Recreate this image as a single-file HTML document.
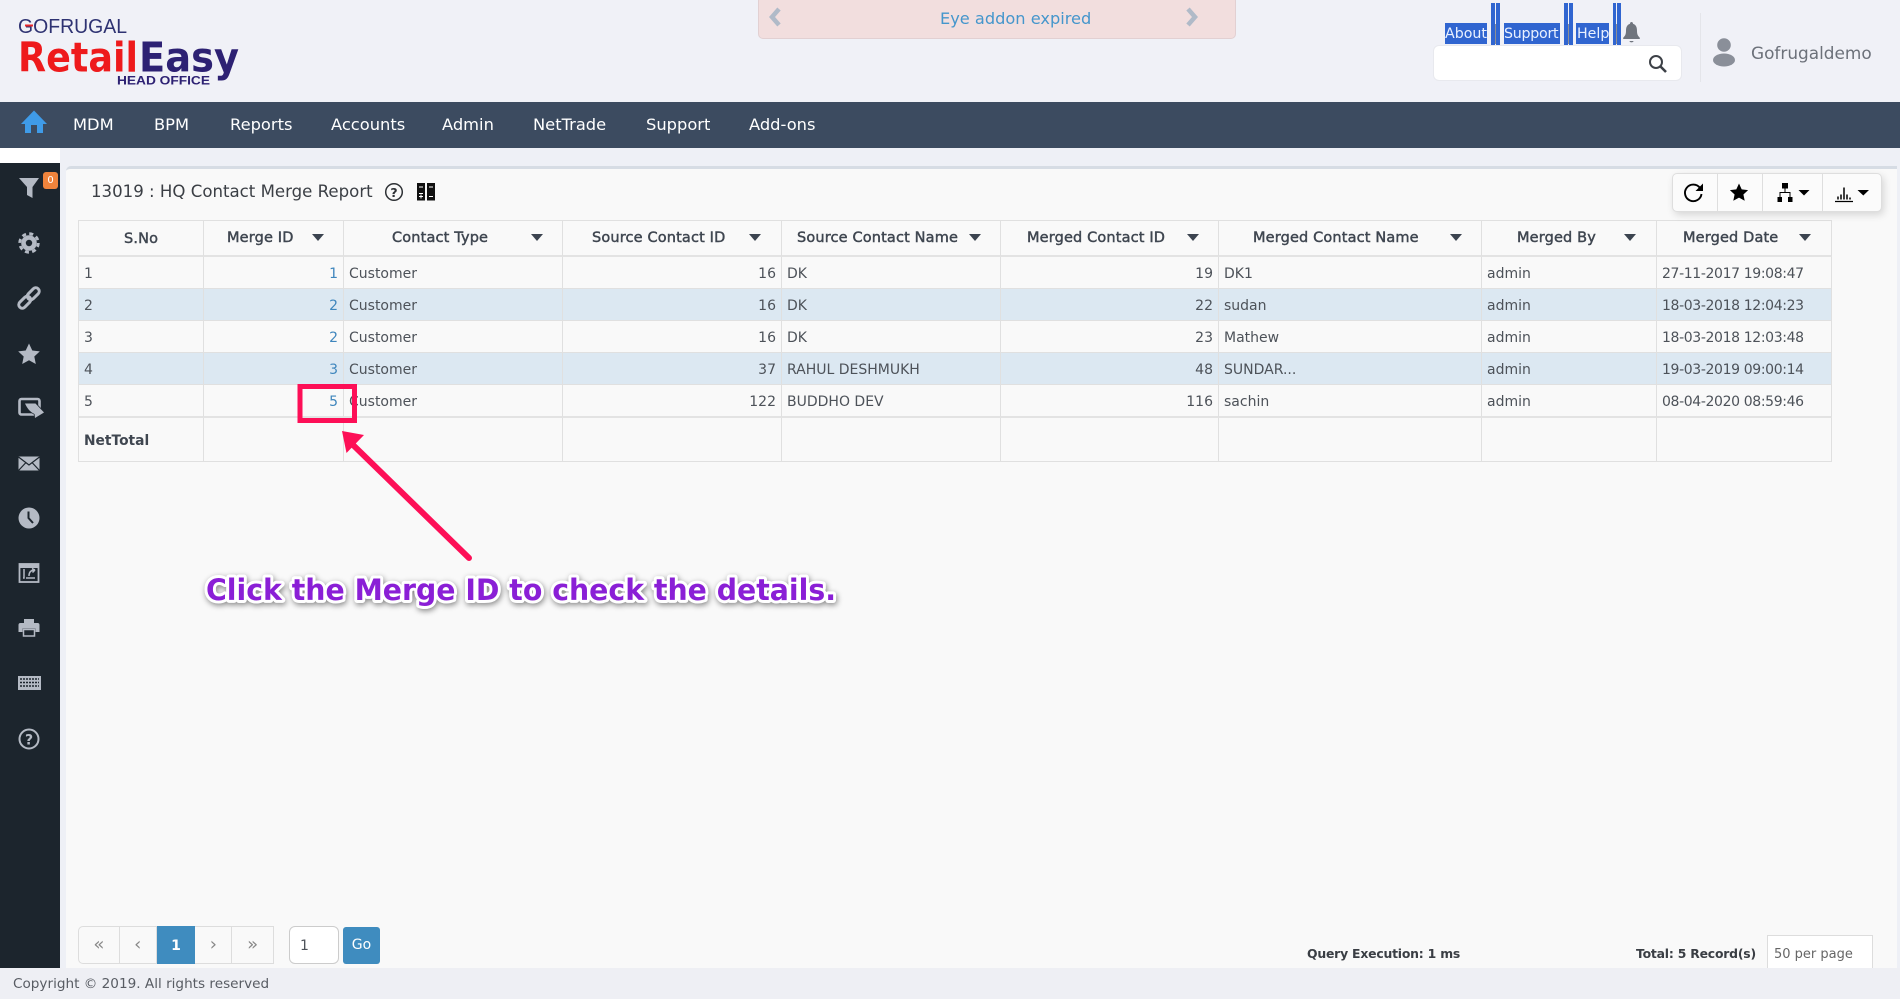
<!DOCTYPE html>
<html lang="en"><head><meta charset="utf-8"><title>HQ Contact Merge Report</title>
<style>
*{box-sizing:border-box}
html,body{margin:0;padding:0;width:1900px;height:999px;overflow:hidden;background:#fff;font-family:"DejaVu Sans","Liberation Sans",sans-serif;color:#4d5259}
.a{position:absolute}
header{position:absolute;left:0;top:0;width:1900px;height:102px;background:#f0f1f7}
nav{position:absolute;left:0;top:102px;width:1900px;height:46px;background:#3c4b60}
nav a{position:absolute;top:0;line-height:46px;color:#fff;font-size:16.3px;white-space:nowrap}
.alert{left:758px;top:-4px;width:478px;height:43px;background:#f2dede;border:1px solid #e2d0d2;border-radius:5px}
.alert span{position:absolute;left:181px;top:7px;line-height:30px;font-size:16.2px;color:#4596cc;white-space:nowrap}
.sel{position:absolute;top:23px;height:21px;background:#3065d0;color:#eaf1ff;font-size:14.2px;line-height:23px;white-space:nowrap;overflow:hidden}
.bar{position:absolute;top:3px;height:42px;width:4px;background:#3065d0}
.gl{position:absolute;top:24px;height:20px;width:1px;background:#8d8f96}
.search{left:1433px;top:45px;width:249px;height:36px;background:#fff;border:1px solid #e8e9ee;border-radius:6px}
.uname{left:1751px;top:41px;line-height:24px;font-size:16.9px;color:#6c717a;white-space:nowrap}
aside{position:absolute;left:0;top:163px;width:60px;height:805px;background:#1c252d}
.bg2{position:absolute;left:60px;top:148px;width:1840px;height:820px;background:#eef0f6}
.gap{position:absolute;left:0;top:148px;width:1900px;height:15px;background:#fff}
main{position:absolute;left:66px;top:166px;width:1831px;height:802px;background:#f9f9f9;border-top:3px solid #d6dce4;border-top-left-radius:5px}
.badge{left:43px;top:172px;width:15px;height:17px;background:#f0843c;border-radius:3px;color:#fff;font-size:10px;line-height:17px;text-align:center}
h1{position:absolute;left:91px;top:180px;margin:0;font-weight:400;font-size:16.6px;line-height:24px;color:#3b3f45;white-space:nowrap}
.tools{left:1672px;top:173px;width:210px;height:39px;background:#fbfbfb;border:1px solid #dedede;border-radius:5px;box-shadow:2px 3px 8px rgba(0,0,0,.14)}
.tools i{position:absolute;top:0;width:1px;height:37px;background:#dedede}
table{position:absolute;left:78px;top:220px;width:1754px;border-collapse:separate;border-spacing:0;table-layout:fixed;font-size:14px;border-left:1px solid #e0e0e0;border-top:1px solid #e0e0e0}
td,th{padding:0 5px;border-right:1px solid #e0e0e0;border-bottom:1px solid #e0e0e0;white-space:nowrap;overflow:hidden;font-weight:400}
th{height:36px;border-bottom:2px solid #e3e3e3;position:relative;color:#3f4650;font-size:14.5px;-webkit-text-stroke:.45px #3f4650}
th span{position:absolute;top:7px;line-height:20px;letter-spacing:.15px}
th b{position:absolute;top:13px;width:0;height:0;border-left:6px solid transparent;border-right:6px solid transparent;border-top:7px solid #3c4450}
tbody td{height:32px;color:#4d5259;padding-top:2px}
tr.alt td{background:#dce8f2}
tr.last td{height:33px;border-bottom:2px solid #e3e3e3}
tr.net td{height:44px;font-weight:700;font-size:13.8px;color:#3f4650}
.r{text-align:right}.l{color:#3f86bd}
.d{letter-spacing:-.37px}
.pg{left:78px;top:926px;width:196px;height:38px;border:1px solid #ddd;border-radius:5px 0 0 5px;background:#f9f9f9;display:flex;list-style:none;margin:0;padding:0;color:#888;font-size:18px}
.pg li{height:36px;line-height:36px;text-align:center;border-right:1px solid #ddd}
.pg li.on{background:#3f8cbf;color:#fff;font-weight:700;border-right:0;margin-top:-1px;height:38px;line-height:40px;font-size:14px}
.pin{left:289px;top:926px;width:50px;height:38px;background:#fff;border:1px solid #ccc;border-radius:6px;font-size:14px;line-height:38px;padding-left:10px}
.go{left:343px;top:927px;width:37px;height:37px;background:#3f8cbf;border-radius:3px;color:#fff;font-size:14px;line-height:37px;text-align:center}
.st{top:944px;line-height:20px;font-size:12.4px;font-weight:700;color:#3a3e44;white-space:nowrap;letter-spacing:-.2px}
.per{left:1767px;top:935px;width:106px;height:33px;background:#fff;border:1px solid #ddd;border-bottom:0;font-size:13px;line-height:38px;padding-left:6px;color:#666;white-space:nowrap}
footer{position:absolute;left:0;top:968px;width:1900px;height:31px;background:#eeeff4;color:#585c63;font-size:13.6px;line-height:33px;padding-left:13px;white-space:nowrap}
svg{position:absolute;left:0;top:0;overflow:visible}
</style></head><body>
<header></header>
<svg width="260" height="100" style="z-index:2">
<text x="18" y="33" font-family="Liberation Sans" font-size="20.5" fill="#2e3272" textLength="109" lengthAdjust="spacingAndGlyphs">GOFRUGAL</text>
<rect x="25" y="24.500" width="8" height="2" fill="#e8262a"/>
<text x="18" y="71.500" font-family="DejaVu Sans" font-weight="700" font-size="41" fill="#ee1a1c" textLength="120" lengthAdjust="spacingAndGlyphs">Retail</text>
<text x="139" y="71.500" font-family="DejaVu Sans" font-weight="700" font-size="41" fill="#2d2173" textLength="100" lengthAdjust="spacingAndGlyphs">Easy</text>
<text x="117" y="84.500" font-family="Liberation Sans" font-weight="700" font-size="11.800" fill="#2d2173" textLength="93" lengthAdjust="spacingAndGlyphs">HEAD OFFICE</text>
</svg>
<div class="a alert"><span>Eye addon expired</span></div>
<svg width="1900" height="102" style="z-index:2" fill="none">
<path d="M779 9 L772 17 L779 25" stroke="#b0bac8" stroke-width="4.500"/>
<path d="M1188 9 L1195 17 L1188 25" stroke="#b0bac8" stroke-width="4.500"/>
<path d="M1631.500 22c1 0 1.500.8 1.500 1.800 3 1 4 3.500 4 7 0 3.500.8 5 2.800 7v1.200h-16.600v-1.200c2-2 2.800-3.500 2.800-7 0-3.500 1-6 4-7 0-1 .5-1.800 1.500-1.800zM1629.500 41h4c0 .9-.9 1.400-2 1.400s-2-.5-2-1.400z" fill="#70757e"/>
<circle cx="1656" cy="62" r="6" stroke="#3d4147" stroke-width="2"/><path d="M1660.500 66.500L1666 72" stroke="#3d4147" stroke-width="2.600"/>
<circle cx="1724" cy="45" r="6.800" fill="#8a8f99"/><ellipse cx="1724" cy="60" rx="11" ry="6.500" fill="#8a8f99"/>
</svg>
<div class="a sel" style="left:1445px;width:42px">About</div>
<div class="bar" style="left:1491px"></div><div class="gl" style="left:1495px"></div><div class="bar" style="left:1496px"></div>
<div class="a sel" style="left:1504px;width:56px;letter-spacing:-.25px">Support</div>
<div class="bar" style="left:1564px"></div><div class="gl" style="left:1568px"></div><div class="bar" style="left:1569px"></div>
<div class="a sel" style="left:1576px;width:33px;padding-left:1px">Help</div>
<div class="bar" style="left:1613px;width:3px"></div><div class="gl" style="left:1616px"></div><div class="bar" style="left:1617px"></div>
<div class="a search"></div>
<div class="a" style="left:1700px;top:13px;width:1px;height:69px;background:#e4e5ea"></div>
<div class="a uname">Gofrugaldemo</div>

<nav>
<svg width="60" height="46"><path d="M34 8.500L47 22h-4v9h-6v-8h-6v8h-6v-9h-4z" fill="#3f9be8"/></svg>
<a style="left:73px">MDM</a><a style="left:154px">BPM</a><a style="left:230px">Reports</a><a style="left:331px">Accounts</a><a style="left:442px">Admin</a><a style="left:533px">NetTrade</a><a style="left:646px">Support</a><a style="left:749px">Add-ons</a>
</nav>
<div class="gap"></div>
<div class="bg2"></div>
<aside></aside>
<svg width="60" height="999" style="z-index:2" fill="#b4bac4">
<path d="M19 178H39L32.500 187V198L27 195V187Z"/>
<circle cx="29" cy="243" r="7.800"/><circle cx="29" cy="243" r="9.300" fill="none" stroke="#b4bac4" stroke-width="2.800" stroke-dasharray="4 3.300"/><circle cx="29" cy="243" r="3.200" fill="#1c252d"/>
<g fill="none" stroke="#b4bac4" stroke-width="3" transform="translate(29 298) rotate(-45)"><rect x="-13" y="-3.500" width="14" height="7" rx="3.500"/><rect x="-1" y="-3.500" width="14" height="7" rx="3.500"/></g>
<path d="M29 343.500l3.300 7 7.500.9-5.500 5.100 1.500 7.500-6.800-3.800-6.800 3.800 1.500-7.500-5.500-5.100 7.500-.9z"/>
<rect x="19.500" y="399" width="20" height="15.500" rx="2" fill="none" stroke="#b4bac4" stroke-width="2.600"/>
<path d="M25 403.500H33L35.500 403.500 44 412.500 35 418 34.500 414C30 412 27 408 25 403.500Z" stroke="#1c252d" stroke-width="1.500" paint-order="stroke"/>
<rect x="18.500" y="456.500" width="21" height="14" fill="#b4bac4"/><path d="M18.500 457L29 465 39.500 457M18.500 470.500L26 462.500M39.500 470.500L32 462.500" fill="none" stroke="#1c252d" stroke-width="1.200"/>
<circle cx="29" cy="518" r="10.500"/><path d="M28.500 511.500V518L33 523" fill="none" stroke="#1c252d" stroke-width="2"/>
<rect x="19.500" y="564" width="19" height="18" fill="none" stroke="#b4bac4" stroke-width="1.800"/><rect x="19" y="563.500" width="20" height="4.500"/><path d="M24 569v9h-1M35 570c-4 0-6 2-6 6M35 570l-3-1.500M35 570l-2.500 2.500M26 578h9" fill="none" stroke="#b4bac4" stroke-width="1.500"/>
<rect x="24" y="619" width="10" height="5"/><path d="M18.500 625a2 2 0 012-2h17a2 2 0 012 2v7h-4v-3.500h-13v3.500h-4z"/><rect x="23.500" y="629.500" width="11" height="6.500" fill="none" stroke="#b4bac4" stroke-width="1.500"/>
<rect x="18" y="676" width="23" height="14"/><path d="M20 679h19M20 682.500h19M20 686h19" stroke="#1c252d" stroke-width="1.400" stroke-dasharray="2 1"/>
<circle cx="29" cy="739" r="9.500" fill="none" stroke="#b4bac4" stroke-width="2"/><text x="29" y="744.500" text-anchor="middle" font-family="DejaVu Sans" font-weight="700" font-size="14" fill="#b4bac4">?</text>
</svg>
<div class="a badge" style="z-index:3">0</div>
<main></main>
<h1>13019 : HQ Contact Merge Report</h1>
<svg width="1900" height="240" style="z-index:2">
<circle cx="394" cy="192" r="8.300" fill="none" stroke="#2e3135" stroke-width="1.500"/><text x="394" y="197" text-anchor="middle" font-family="DejaVu Sans" font-weight="700" font-size="12.500" fill="#2e3135">?</text>
<rect x="417" y="183" width="8" height="17.500" fill="#111"/><rect x="427" y="183" width="8" height="17.500" fill="#111"/><path d="M419 187h4M429 187h4M429 196.500h4M419 193.500h4M419 196.500h4M421 194.500v4" stroke="#fff" stroke-width="1"/>
</svg>
<div class="a tools" style="z-index:2"><i style="left:44px"></i><i style="left:89px"></i><i style="left:149px"></i></div>
<svg width="1900" height="240" style="z-index:3" fill="#000">
<path d="M1700 188a8.300 8.300 0 1 0 1.500 6" fill="none" stroke="#000" stroke-width="1.900"/><path d="M1703 183.500v7.500h-7.500z"/>
<path d="M1739 183.500l2.700 5.900 6.400.7-4.700 4.400 1.300 6.300-5.700-3.200-5.700 3.200 1.300-6.300-4.700-4.400 6.400-.7z"/>
<rect x="1782" y="183" width="6" height="5.500"/><rect x="1777.500" y="197" width="4.500" height="5"/><rect x="1788" y="197" width="4.500" height="5"/><path d="M1785 188v4M1780 197v-4.500h10V197" fill="none" stroke="#000" stroke-width="1"/>
<path d="M1798.500 190h11l-5.500 5.500z"/>
<path d="M1835 201.500h18" stroke="#000" stroke-width="1.300"/><path d="M1838 199.500v-3M1841 199.500v-5M1844 199.500v-12M1847 199.500v-5M1850 199.500v-2" stroke="#000" stroke-width="1.500"/>
<path d="M1857.500 190h11.500l-5.700 5.500z"/>
</svg>
<table style="z-index:1">
<colgroup><col style="width:125px"><col style="width:140px"><col style="width:219px"><col style="width:219px"><col style="width:219px"><col style="width:218px"><col style="width:263px"><col style="width:175px"><col style="width:175px"></colgroup>
<thead><tr>
<th><span style="left:45px;top:8px">S.No</span></th>
<th><span style="left:23px">Merge ID</span><b style="left:108px"></b></th>
<th><span style="left:48px">Contact Type</span><b style="left:187px"></b></th>
<th><span style="left:29px">Source Contact ID</span><b style="left:186px"></b></th>
<th><span style="left:15px">Source Contact Name</span><b style="left:187px"></b></th>
<th><span style="left:26px">Merged Contact ID</span><b style="left:186px"></b></th>
<th><span style="left:34px">Merged Contact Name</span><b style="left:231px"></b></th>
<th><span style="left:35px">Merged By</span><b style="left:142px"></b></th>
<th><span style="left:26px">Merged Date</span><b style="left:142px"></b></th>
</tr></thead>
<tbody>
<tr><td>1</td><td class="r l">1</td><td>Customer</td><td class="r">16</td><td>DK</td><td class="r">19</td><td>DK1</td><td>admin</td><td class="d">27-11-2017 19:08:47</td></tr>
<tr class="alt"><td>2</td><td class="r l">2</td><td>Customer</td><td class="r">16</td><td>DK</td><td class="r">22</td><td>sudan</td><td>admin</td><td class="d">18-03-2018 12:04:23</td></tr>
<tr><td>3</td><td class="r l">2</td><td>Customer</td><td class="r">16</td><td>DK</td><td class="r">23</td><td>Mathew</td><td>admin</td><td class="d">18-03-2018 12:03:48</td></tr>
<tr class="alt"><td>4</td><td class="r l">3</td><td>Customer</td><td class="r">37</td><td>RAHUL DESHMUKH</td><td class="r">48</td><td>SUNDAR...</td><td>admin</td><td class="d">19-03-2019 09:00:14</td></tr>
<tr class="last"><td>5</td><td class="r l">5</td><td>Customer</td><td class="r">122</td><td>BUDDHO DEV</td><td class="r">116</td><td>sachin</td><td>admin</td><td class="d">08-04-2020 08:59:46</td></tr>
<tr class="net"><td>NetTotal</td><td></td><td></td><td></td><td></td><td></td><td></td><td></td><td></td></tr>
</tbody></table>
<ul class="a pg" style="z-index:1">
<li style="width:41px">«</li><li style="width:37px">‹</li><li class="on" style="width:39px">1</li><li style="width:37px">›</li><li style="width:41px;border-right:0">»</li>
</ul>
<div class="a pin" style="z-index:1">1</div>
<div class="a go" style="z-index:1">Go</div>
<div class="a st" style="left:1307px;z-index:1">Query Execution: 1 ms</div>
<div class="a st" style="left:1636px;z-index:1">Total: 5 Record(s)</div>
<div class="a per" style="z-index:1">50 per page</div>
<footer style="z-index:4">Copyright © 2019. All rights reserved</footer>
<svg width="1900" height="999" style="z-index:5" fill="none">
<rect x="300" y="386.500" width="54.500" height="34" stroke="#fd0f57" stroke-width="5"/>
<path d="M469 558L349 441" stroke="#fd0f57" stroke-width="6" stroke-linecap="round"/>
<path d="M342 431L364 435 346.500 453Z" fill="#fd0f57"/>
<text x="206" y="600" font-family="DejaVu Sans" font-weight="700" font-size="29" fill="#8a1fd6" stroke="#fff" stroke-width="6" stroke-linejoin="round" paint-order="stroke" textLength="630" lengthAdjust="spacingAndGlyphs" style="filter:drop-shadow(1px 2px 3px rgba(0,0,0,.45))">Click the Merge ID to check the details.</text>
</svg>
</body></html>
